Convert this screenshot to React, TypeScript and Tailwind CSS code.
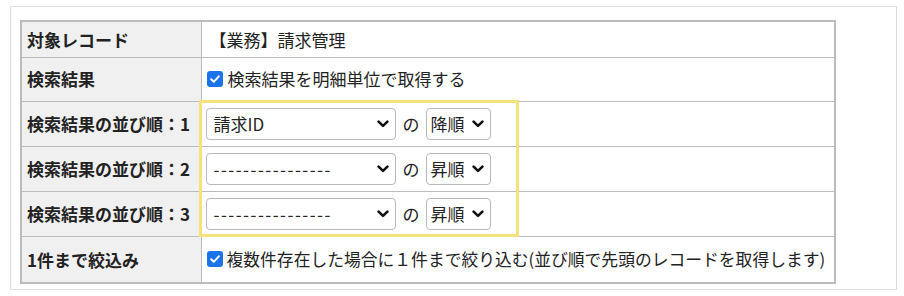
import React from 'react';

const font = { fontFamily: '"Noto Sans CJK JP", "Noto Sans", sans-serif' };

function Chevron() {
  return (
    <svg width="12" height="8" viewBox="0 0 12 8" className="pointer-events-none absolute right-[7px] top-1/2 -translate-y-1/2">
      <path d="M1.6 1.6 L6 5.9 L10.4 1.6" fill="none" stroke="#111" strokeWidth="2.6" strokeLinecap="round" strokeLinejoin="round" />
    </svg>
  );
}

function Select({ value, width, pad, dashed }: { value: string; width: string; pad: string; dashed?: boolean }) {
  return (
    <div className={`relative ${width} h-[32px]`}>
      <div className={`flex h-full items-center rounded-[4px] border border-[#b9b9b9] bg-white ${pad} text-[17px] text-[#222]`}>
        <span className={dashed ? 'tracking-[1.5px]' : ''}>{value}</span>
      </div>
      <Chevron />
    </div>
  );
}

function Check() {
  return (
    <span className="flex h-[16px] w-[16px] shrink-0 items-center justify-center rounded-[3px] bg-[#1a73e8]">
      <svg width="12" height="12" viewBox="0 0 12 12">
        <path d="M2.2 6.3 L4.8 8.8 L9.8 3.3" fill="none" stroke="white" strokeWidth="2" strokeLinecap="round" strokeLinejoin="round" />
      </svg>
    </span>
  );
}

function SortRow({ n, value, order }: { n: number; value: string; order: string }) {
  const dashed = value.startsWith('-');
  return (
    <tr className="h-[45px]">
      <th className="border border-[#bcbcbc] bg-[#f0f0f0] pl-[5px] text-left font-bold">検索結果の並び順：{n}</th>
      <td className="border border-[#bcbcbc] pl-[4px]">
        <div className="flex items-center">
          <Select value={value} width="w-[190px]" pad="pl-[7px]" dashed={dashed} />
          <span className="ml-[7px] mr-[6px]">の</span>
          <Select value={order} width="w-[65px]" pad="pl-[4px]" />
        </div>
      </td>
    </tr>
  );
}

export default function App() {
  return (
    <div className="h-[296px] w-[904px] bg-white pl-[10px] pt-[6px] text-[17px] text-[#222]" style={font}>
      <div className="relative h-[284px] w-[887px] border border-[#dcdcdc] pl-[9px] pt-[13px]">
        <table className="w-[816px] table-fixed border-collapse border-2 border-[#bcbcbc]">
          <colgroup>
            <col className="w-[180px]" />
            <col />
          </colgroup>
          <tbody>
            <tr className="h-[36px]">
              <th className="border border-[#bcbcbc] bg-[#f0f0f0] pl-[5px] text-left font-bold">対象レコード</th>
              <td className="border border-[#bcbcbc] pl-[8px]">【業務】請求管理</td>
            </tr>
            <tr className="h-[44px]">
              <th className="border border-[#bcbcbc] bg-[#f0f0f0] pl-[5px] text-left font-bold">検索結果</th>
              <td className="border border-[#bcbcbc] pl-[5px]">
                <div className="flex items-center gap-[5px]">
                  <Check />
                  <span>検索結果を明細単位で取得する</span>
                </div>
              </td>
            </tr>
            <SortRow n={1} value="請求ID" order="降順" />
            <SortRow n={2} value="----------------" order="昇順" />
            <SortRow n={3} value="----------------" order="昇順" />
            <tr className="h-[47px]">
              <th className="border border-[#bcbcbc] bg-[#f0f0f0] pl-[5px] text-left font-bold">1件まで絞込み</th>
              <td className="border border-[#bcbcbc] pl-[5px]">
                <div className="flex items-center gap-[4px]">
                  <Check />
                  <span className="whitespace-nowrap text-[16.8px]">複数件存在した場合に１件まで絞り込む(並び順で先頭のレコードを取得します)</span>
                </div>
              </td>
            </tr>
          </tbody>
        </table>
        <div className="pointer-events-none absolute left-[188px] top-[93px] h-[137px] w-[320px] border-[3px] border-[#f6e27a]" />
      </div>
    </div>
  );
}
